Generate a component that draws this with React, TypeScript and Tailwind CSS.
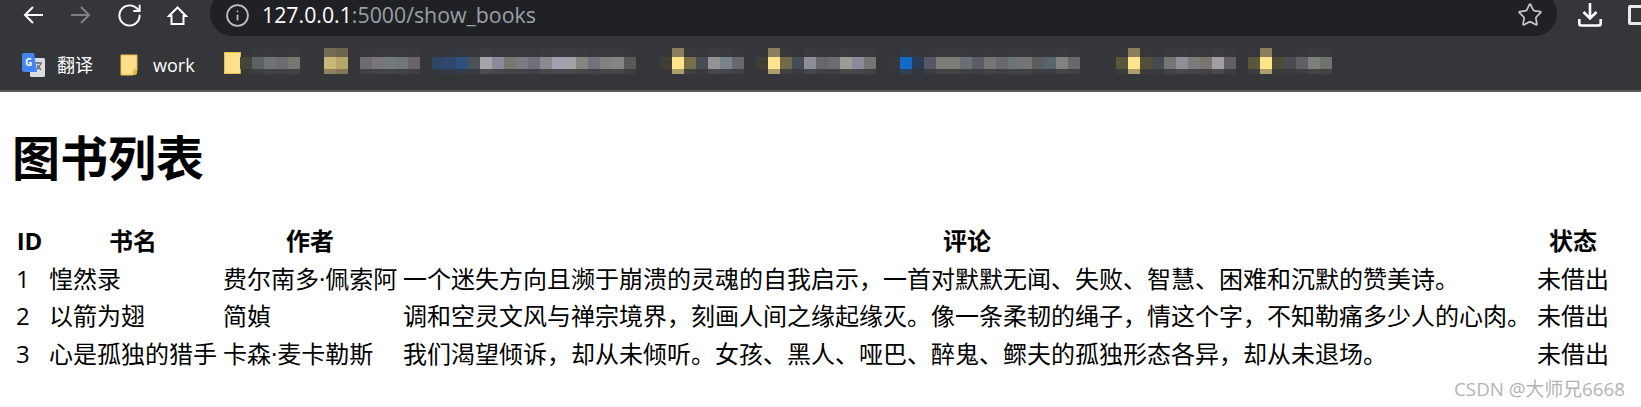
import { Info, RotateCw, Star } from 'lucide-react';

const books = [
  {
    id: 1,
    title: '惶然录',
    author: '费尔南多·佩索阿',
    review: '一个迷失方向且濒于崩溃的灵魂的自我启示，一首对默默无闻、失败、智慧、困难和沉默的赞美诗。',
  },
  {
    id: 2,
    title: '以箭为翅',
    author: '简媜',
    review: '调和空灵文风与禅宗境界，刻画人间之缘起缘灭。像一条柔韧的绳子，情这个字，不知勒痛多少人的心肉。',
  },
  {
    id: 3,
    title: '心是孤独的猎手',
    author: '卡森·麦卡勒斯',
    review: '我们渴望倾诉，却从未倾听。女孩、黑人、哑巴、醉鬼、鳏夫的孤独形态各异，却从未退场。',
  },
];

// blurred bookmarks: start x on the 12px mosaic grid, then one colour per cell
const mosaic: [number, string[]][] = [
  [240, ['#45443a', '#5e6162', '#6f7375', '#6a6c70', '#79756f']],
  [324, ['#c8b878', '#b5a76a']],
  [360, ['#6d6a73', '#7a757b', '#737a7a', '#6f7878', '#6a6468']],
  [432, ['#2f4668', '#30486e', '#2f4f7c', '#4a5258', '#a5a5a8', '#8a8a9a', '#787670', '#7a7a80', '#70707a', '#8a8a90', '#a0a0b0', '#a5a0a5', '#85857f', '#72727e', '#858080', '#808585', '#5c5858']],
  [660, ['#3f3d35', '#ffe48a', '#75704a', '#484d55', '#949494', '#7a8488', '#686868']],
  [756, ['#3f3d35', '#ffe48a', '#6f6a48', '#454b55', '#8d8d95', '#68666a', '#6c6d72', '#9c9c96', '#8b8a9b', '#747570']],
  [888, ['#36383c', '#116ac8', '#2a3c55', '#565664', '#7a7e76', '#7a7e76', '#697075', '#5c5c64', '#767474', '#696a70', '#6c7478', '#747472', '#5c5e5e', '#56666a', '#828280', '#6a686a']],
  [1116, ['#5a563e', '#ffe48a', '#52503a', '#454a50', '#757575', '#8d9095', '#7b7b7b', '#787470', '#a29ea2', '#626066']],
  [1248, ['#5a563e', '#ffe48a', '#4e4a38', '#4a4a50', '#5f6065', '#7c8078', '#6e736e']],
];

const STRIP_X = 224;

function BlurredBookmarks() {
  return (
    <svg width="1110" height="27" viewBox="0 0 1110 27" className="shrink-0">
      <rect x="0.5" y="4.5" width="16" height="21" fill="#ffe08a" stroke="#e8c04e" />
      {mosaic.map(([start, cells]) =>
        cells.map((color, i) => {
          const x = start - STRIP_X + i * 12;
          const folder = color === '#ffe48a' || color === '#c8b878' || color === '#b5a76a';
          return (
            <g key={`${start}-${i}`}>
              <rect x={x} y="0" width="12" height="9" fill={color} fillOpacity={folder ? 0.42 : 0.06} />
              <rect x={x} y="9" width="12" height="12" fill={color} />
              <rect x={x} y="21" width="12" height="5" fill={color} fillOpacity={folder ? 0.6 : 0.2} />
            </g>
          );
        }),
      )}
    </svg>
  );
}

function FolderIcon() {
  return (
    <svg width="18" height="22" viewBox="0 0 18 22" className="shrink-0">
      <path d="M1 1h16v16l-4 4H1z" fill="#ffe08a" stroke="#e8c04e" strokeWidth="1" />
      <path d="M17 15v4a2 2 0 0 1-2 2h-2v-4a2 2 0 0 1 2-2z" fill="#e8b93c" />
    </svg>
  );
}

function TranslateIcon() {
  return (
    <svg width="23" height="24" viewBox="0 0 23 24" className="shrink-0">
      <rect x="8" y="5" width="15" height="19" rx="1.5" fill="#d9dce0" />
      <path d="M13 10h7M16 9v2M14 17l5-6M15 12l4 5" stroke="#6b7075" strokeWidth="1.4" fill="none" />
      <path d="M2 0h10l3 19H2a2 2 0 0 1-2-2V2a2 2 0 0 1 2-2z" fill="#4285f4" />
      <text x="3" y="13" fontSize="10" fontWeight="700" fill="#fff" fontFamily="Open Sans, sans-serif">
        G
      </text>
    </svg>
  );
}

function BackArrow() {
  return (
    <svg width="20" height="18" viewBox="0 0 20 18" fill="none" stroke="#fff" strokeWidth="2" className="ml-[23px] shrink-0">
      <path d="M20 9H2M10 1 2 9l8 8" />
    </svg>
  );
}

function ForwardArrow() {
  return (
    <svg width="20" height="18" viewBox="0 0 20 18" fill="none" stroke="#7f8083" strokeWidth="2" className="ml-[28px] shrink-0">
      <path d="M0 9h18M10 1l8 8-8 8" />
    </svg>
  );
}

function HomeIcon() {
  return (
    <svg width="21" height="19" viewBox="0 0 21 19" fill="none" stroke="#fff" strokeWidth="2" className="ml-[24px] shrink-0">
      <path d="M10.5 1.5 2 10h2.5v8h12v-8H19z" />
    </svg>
  );
}

function DownloadIcon() {
  return (
    <svg width="24" height="24" viewBox="0 0 24 24" fill="none" stroke="#fff" strokeWidth="2.6" className="shrink-0">
      <path d="M12 0v15M5.500 9l6.500 6.500L18.500 9" />
      <path d="M1.300 16v4.500a2 2 0 0 0 2 2h17.400a2 2 0 0 0 2-2V16" />
    </svg>
  );
}

export default function App() {
  return (
    <div className="h-[407px] w-[1641px] relative overflow-hidden bg-white font-['Open_Sans','Noto_Sans_CJK_SC',sans-serif] text-black">
      <header className="h-[92px] bg-[#35363a] border-b-2 border-[#5b5c60]">
        <div className="h-[36px] flex items-end overflow-hidden">
          <div className="h-[30px] self-start flex items-center shrink-0 w-[210px]">
            <BackArrow />
            <ForwardArrow />
            <RotateCw size={27} strokeWidth={1.7} className="ml-[25px] text-white shrink-0" />
            <HomeIcon />
          </div>
          <div className="h-[45px] w-[1347px] shrink-0 rounded-full bg-[#202124] flex items-center pt-[3px] pl-[15px] pr-[14px]">
            <Info size={25} strokeWidth={1.7} className="text-[#bdc1c6] shrink-0" />
            <span className="ml-[12px] text-[21.300px] leading-[30px] text-[#9aa0a6] whitespace-nowrap">
              <span className="text-white">127.0.0.1</span>:5000/show_books
            </span>
            <Star size={26} strokeWidth={1.6} className="ml-auto text-[#c4c7cb] shrink-0" />
          </div>
          <div className="h-[30px] self-start flex items-center shrink-0 pl-[21px]">
            <DownloadIcon />
            <div className="ml-[26px] h-[20px] w-[20px] shrink-0 border-[3px] border-[#e8eaed] rounded-[2px]" />
          </div>
        </div>
        <div className="h-[54px] flex items-start pt-[12px] text-white">
          <div className="ml-[22px] mt-[4px] w-[98px] h-[26px] flex items-center gap-[12px] text-[18px] leading-[26px] shrink-0">
            <TranslateIcon />
            <span>翻译</span>
          </div>
          <div className="mt-[4px] w-[104px] h-[26px] flex items-center gap-[15px] text-[18px] leading-[26px] shrink-0">
            <FolderIcon />
            <span>work</span>
          </div>
          <BlurredBookmarks />
        </div>
      </header>

      <main className="pl-[12px]">
        <h1 className="mt-[34px] h-[96px] text-[48px] leading-[64px] font-bold">图书列表</h1>
        <table className="ml-[4px] border-separate border-spacing-0 text-[24px] leading-[37.500px] table-fixed w-[1591px]">
          <colgroup>
            <col className="w-[33px]" />
            <col className="w-[174px]" />
            <col className="w-[180px]" />
            <col className="w-[1134px]" />
            <col className="w-[70px]" />
          </colgroup>
          <thead>
            <tr className="font-bold">
              <th className="pr-[6px] font-bold">ID</th>
              <th className="pr-[6px] font-bold">书名</th>
              <th className="pr-[6px] font-bold">作者</th>
              <th className="pr-[6px] font-bold">评论</th>
              <th className="pl-[2px] font-bold">状态</th>
            </tr>
          </thead>
          <tbody>
            {books.map(book => (
              <tr key={book.id} className="whitespace-nowrap">
                <td>{book.id}</td>
                <td>{book.title}</td>
                <td>{book.author}</td>
                <td>{book.review}</td>
                <td>未借出</td>
              </tr>
            ))}
          </tbody>
        </table>
      </main>

      <span className="absolute left-[1454px] top-[377px] text-[18.800px] leading-[24px] text-[#b3b3b3] whitespace-nowrap">
        CSDN @大师兄6668
      </span>
    </div>
  );
}
